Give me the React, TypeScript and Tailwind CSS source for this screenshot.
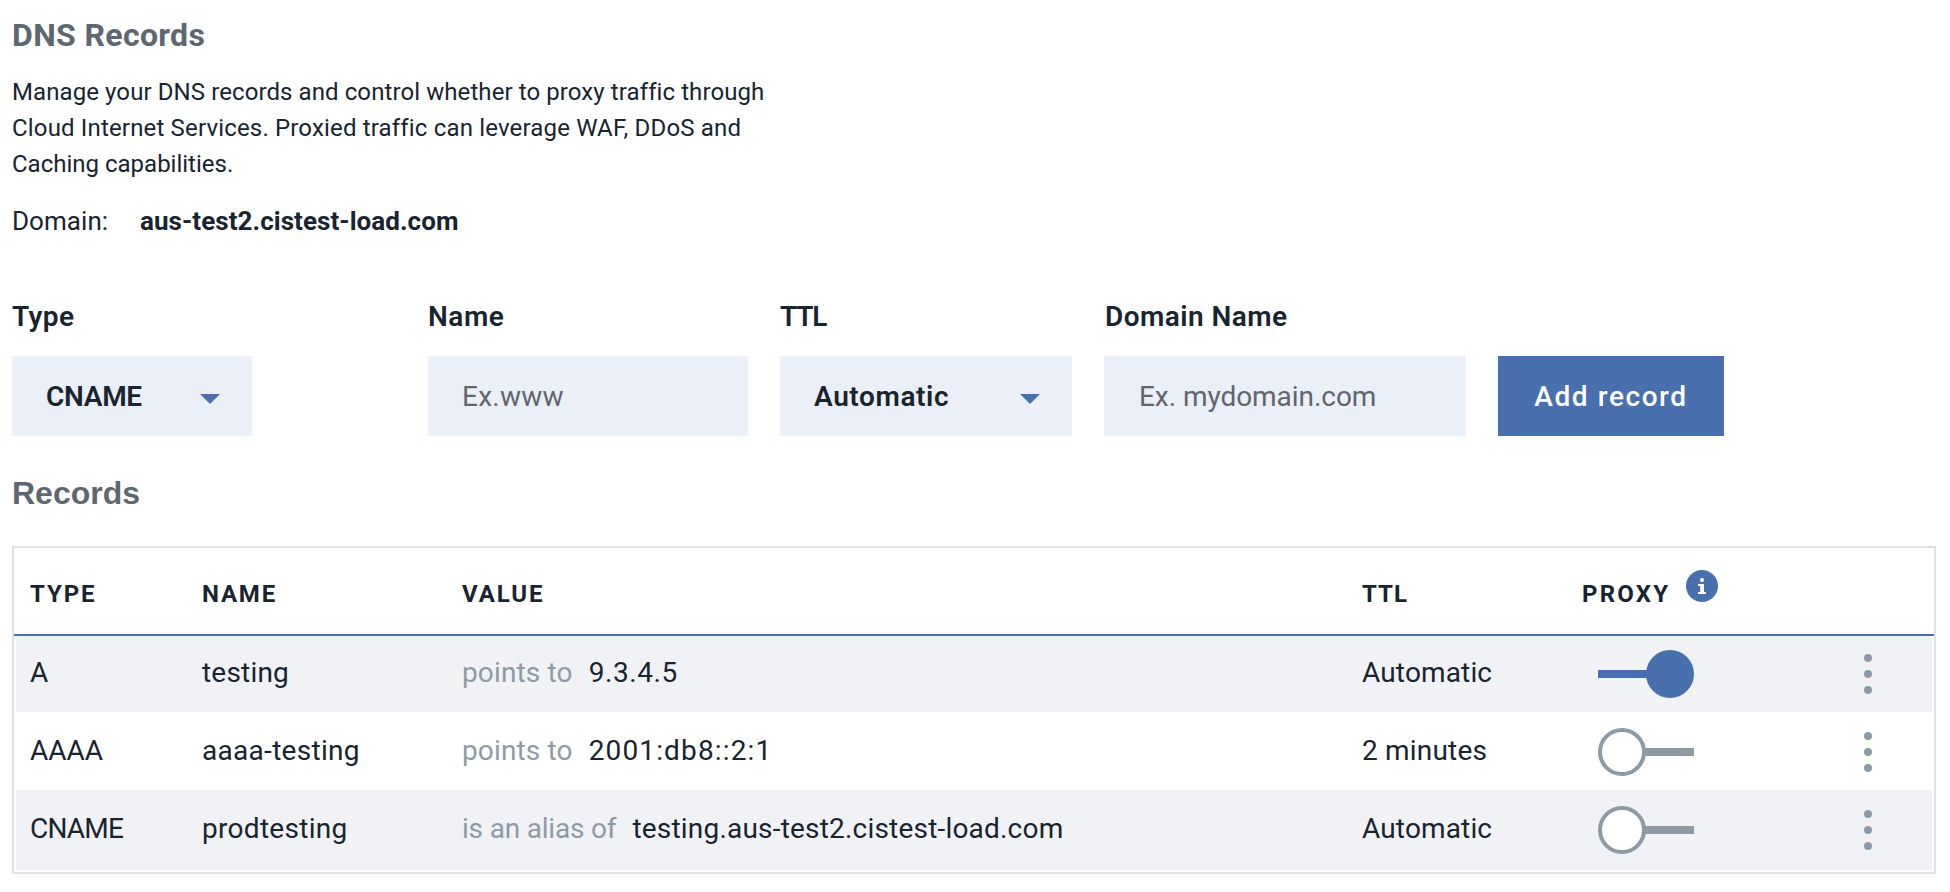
type Tracked = { text: string; tracking: string };

type DnsRecord = {
  type: Tracked;
  name: Tracked;
  relation: Tracked;
  target: Tracked;
  ttl: Tracked;
  proxied: boolean;
  row: string;
};

const records: DnsRecord[] = [
  {
    type: { text: "A", tracking: "tracking-normal" },
    name: { text: "testing", tracking: "tracking-[0.2px]" },
    relation: { text: "points to", tracking: "tracking-[0.14px]" },
    target: { text: "9.3.4.5", tracking: "tracking-[0.6px]" },
    ttl: { text: "Automatic", tracking: "tracking-[0.15px]" },
    proxied: true,
    row: "h-[76px] bg-[#f1f2f6]",
  },
  {
    type: { text: "AAAA", tracking: "tracking-[0px]" },
    name: { text: "aaaa-testing", tracking: "tracking-[0.3px]" },
    relation: { text: "points to", tracking: "tracking-[0.14px]" },
    target: { text: "2001:db8::2:1", tracking: "tracking-[1.15px]" },
    ttl: { text: "2 minutes", tracking: "tracking-[0.19px]" },
    proxied: false,
    row: "h-[78px] pt-[2px]",
  },
  {
    type: { text: "CNAME", tracking: "tracking-[-0.79px]" },
    name: { text: "prodtesting", tracking: "tracking-[0.3px]" },
    relation: { text: "is an alias of", tracking: "tracking-[-0.19px]" },
    target: { text: "testing.aus-test2.cistest-load.com", tracking: "tracking-[0.2px]" },
    ttl: { text: "Automatic", tracking: "tracking-[0.15px]" },
    proxied: false,
    row: "h-20 bg-[#f1f2f6]",
  },
];

function Caret() {
  return (
    <svg width="20" height="10" viewBox="0 0 20 10" className="mt-[5px]" aria-hidden="true">
      <path d="M0 0H20L10 10Z" fill="#4870ae" />
    </svg>
  );
}

function InfoIcon() {
  return (
    <svg width="32" height="32" viewBox="0 0 32 32" className="mb-4" aria-hidden="true">
      <circle cx="16" cy="16" r="16" fill="#4870ae" />
      <circle cx="16" cy="10" r="2.1" fill="#fff" />
      <path d="M12 14h6v8h2v2h-8v-2h2.2v-6H12Z" fill="#fff" />
    </svg>
  );
}

function Toggle({ on }: { on: boolean }) {
  return on ? (
    <svg width="96" height="48" viewBox="0 0 96 48" className="ml-4" role="switch" aria-checked="true">
      <path d="M0 20h60v8H0Z" fill="#4870ae" />
      <circle cx="72" cy="24" r="24" fill="#4870ae" />
    </svg>
  ) : (
    <svg width="96" height="48" viewBox="0 0 96 48" className="ml-4" role="switch" aria-checked="false">
      <path d="M44 20h52v8H44Z" fill="#8e9ba4" />
      <circle cx="24" cy="24" r="22" fill="#fff" stroke="#8e9ba4" strokeWidth="4" />
    </svg>
  );
}

function OverflowMenu() {
  return (
    <button type="button" className="flex flex-col gap-2">
      <span className="size-2 rounded-full bg-[#8e9ba4]" />
      <span className="size-2 rounded-full bg-[#8e9ba4]" />
      <span className="size-2 rounded-full bg-[#8e9ba4]" />
    </button>
  );
}

function Cell({ value }: { value: Tracked }) {
  return <span className={`block pb-[3px] ${value.tracking}`}>{value.text}</span>;
}

export default function App() {
  return (
    <main className="min-h-[892px] bg-white pt-[15px] pr-3 pl-3 font-['Roboto','Liberation_Sans',sans-serif] text-[#182430]">
      <h1 className="text-[32px] leading-10 font-bold tracking-[0.35px] text-[#5c6770]">DNS Records</h1>

      <p className="mt-[19px] text-2xl leading-9 whitespace-nowrap">
        <span className="block tracking-[0.09px]">
          Manage your DNS records and control whether to proxy traffic through
        </span>
        <span className="block tracking-[0.165px]">
          Cloud Internet Services. Proxied traffic can leverage WAF, DDoS and
        </span>
        <span className="block">Caching capabilities.</span>
      </p>

      <div className="mt-[21px] flex text-[26px] leading-9">
        <span className="w-32 tracking-[0.05px]">Domain:</span>
        <span className="font-bold tracking-[0.06px]">aus-test2.cistest-load.com</span>
      </div>

      <form className="mt-[60px] flex items-end text-[28px] leading-9" onSubmit={(e) => e.preventDefault()}>
        <div className="mr-44 flex w-60 flex-col gap-[21px]">
          <span className="font-semibold tracking-[0.4px]">Type</span>
          <button
            type="button"
            className="flex h-20 items-center justify-between bg-[#ebeff7] pt-px pr-8 pl-[34px] font-semibold tracking-[-0.3px]"
          >
            CNAME
            <Caret />
          </button>
        </div>
        <div className="mr-8 flex w-80 flex-col gap-[21px]">
          <span className="font-semibold tracking-[0.55px]">Name</span>
          <input
            placeholder="Ex.www"
            className="h-20 bg-[#ebeff7] px-[34px] tracking-[0.25px] outline-none placeholder:text-[#5f6671]"
          />
        </div>
        <div className="mr-8 flex w-[292px] flex-col gap-[21px]">
          <span className="font-semibold tracking-[-1.2px]">TTL</span>
          <button
            type="button"
            className="flex h-20 items-center justify-between bg-[#ebeff7] pt-px pr-8 pl-[34px] font-semibold tracking-[0.6px]"
          >
            Automatic
            <Caret />
          </button>
        </div>
        <div className="mr-8 flex w-[362px] flex-col gap-[21px]">
          <span className="pl-px font-semibold tracking-[0.45px]">Domain Name</span>
          <input
            placeholder="Ex. mydomain.com"
            className="h-20 bg-[#ebeff7] px-[35px] tracking-[-0.05px] outline-none placeholder:text-[#5f6671]"
          />
        </div>
        <button type="submit" className="h-20 w-[226px] bg-[#4870ae] pt-px font-medium tracking-[1.57px] text-white">
          Add record
        </button>
      </form>

      <h2 className="mt-[37px] font-['Liberation_Sans',sans-serif] text-[32px] leading-10 font-bold text-[#5c6770]">
        Records
      </h2>

      <section className="mt-[33px] w-[1924px] border-2 border-[#dfe3e6]">
        <div className="grid h-[88px] grid-cols-[172px_260px_900px_220px] items-center border-b-2 border-[#4870ae] pt-1.5 pl-4 text-2xl leading-8 font-bold">
          <span className="tracking-[1.9px]">TYPE</span>
          <span className="tracking-[1.8px]">NAME</span>
          <span className="tracking-[1.9px]">VALUE</span>
          <span className="tracking-[1px]">TTL</span>
          <div className="col-start-5 flex h-8 items-center">
            <span className="w-[104px] tracking-[2.2px]">PROXY</span>
            <InfoIcon />
          </div>
        </div>

        <div className="mx-0.5 mb-0.5 text-[28px] leading-9">
          {records.map((record) => (
            <div
              key={record.name.text}
              className={`grid grid-cols-[172px_260px_900px_220px_282px_8px] items-center pl-3.5 ${record.row}`}
            >
              <Cell value={record.type} />
              <Cell value={record.name} />
              <div className="flex gap-4">
                <span className="text-[#8e9ba4]">
                  <Cell value={record.relation} />
                </span>
                <Cell value={record.target} />
              </div>
              <Cell value={record.ttl} />
              <Toggle on={record.proxied} />
              <OverflowMenu />
            </div>
          ))}
        </div>
      </section>
    </main>
  );
}
